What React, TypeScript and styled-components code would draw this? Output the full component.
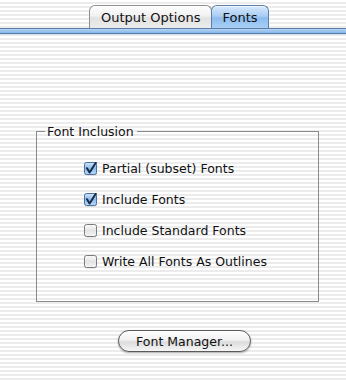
import React from 'react';
import styled, { createGlobalStyle } from 'styled-components';

const Global = createGlobalStyle`
  html, body { margin: 0; padding: 0; }
  body {
    font-family: "DejaVu Sans", "Liberation Sans", sans-serif;
    background: #f4f4f4;
  }
`;

const Window = styled.div`
  width: 346px;
  height: 382px;
  overflow: hidden;
  background: repeating-linear-gradient(
    to bottom,
    #ffffff 0px,
    #ffffff 2px,
    #ececec 2px,
    #ececec 4px
  );
  font-size: 12.5px;
  color: #111;
`;

const TabBar = styled.div`
  display: flex;
  justify-content: flex-start;
  padding-left: 89px;
  padding-top: 5px;
  height: 23px;
  align-items: flex-end;
  position: relative;
  z-index: 1;
`;

const Tab = styled.div<{ $active?: boolean }>`
  height: 23px;
  box-sizing: border-box;
  display: flex;
  align-items: center;
  justify-content: center;
  padding: 1px ${p => (p.$active ? '10px' : '11px')} 0;
  margin-right: -1px;
  border: 1px solid ${p => (p.$active ? '#5d7ea8' : '#8e8e8e')};
  border-bottom: none;
  border-radius: 6px 6px 0 0;
  font-size: 13px;
  color: #111;
  background: ${p =>
    p.$active
      ? 'linear-gradient(to bottom, #d8eafc 0%, #a9cdf3 45%, #8dbcee 55%, #a8d0f6 100%)'
      : 'linear-gradient(to bottom, #fdfdfd 0%, #f1f1f1 45%, #e2e2e2 55%, #ececec 100%)'};
  box-shadow: ${p => (p.$active ? 'inset 0 1px 0 #eef6ff' : 'inset 0 1px 0 #ffffff')};
`;

const Band = styled.div`
  height: 6px;
  box-sizing: border-box;
  border-top: 1px solid #5b7ea9;
  border-bottom: 1px solid #4f7bb1;
  background: linear-gradient(to bottom, #b8d7f6 0%, #9cc4ef 50%, #8ab8ea 100%);
  box-shadow: 0 1px 0 #d9e3ee;
`;

const Body = styled.div`
  padding: 90px 28px 0 36px;
`;

const Group = styled.fieldset`
  margin: 0;
  width: 283px;
  height: 178px;
  box-sizing: border-box;
  border: 1px solid #8a8a8a;
  padding: 0;
`;

const Legend = styled.legend`
  margin-left: 8px;
  padding: 0 3px 0 2px;
  font-size: 12.5px;
  color: #111;
`;

const Options = styled.div`
  display: flex;
  flex-direction: column;
  gap: 18px;
  padding: 23px 0 0 47px;
`;

const Row = styled.label`
  display: flex;
  align-items: center;
  gap: 4px;
  height: 13px;
  font-size: 12.5px;
  color: #111;
`;

const BoxWrap = styled.span`
  width: 14px;
  height: 14px;
  display: inline-flex;
`;

const CheckBox = ({ checked }: { checked: boolean }) => (
  <BoxWrap>
    <svg width="14" height="14" viewBox="0 0 14 14">
      <defs>
        <linearGradient id={checked ? 'cbOn' : 'cbOff'} x1="0" y1="0" x2="0" y2="1">
          {checked ? (
            <>
              <stop offset="0" stopColor="#cfe4fb" />
              <stop offset="0.5" stopColor="#8dbbec" />
              <stop offset="1" stopColor="#b9d9fa" />
            </>
          ) : (
            <>
              <stop offset="0" stopColor="#fbfbfb" />
              <stop offset="0.5" stopColor="#e4e4e4" />
              <stop offset="1" stopColor="#f4f4f4" />
            </>
          )}
        </linearGradient>
      </defs>
      <rect x="1" y="1.5" width="12" height="12" rx="2" fill="#bdbdbd" opacity="0.6" />
      <rect
        x="0.5"
        y="0.5"
        width="12"
        height="12"
        rx="2"
        fill={`url(#${checked ? 'cbOn' : 'cbOff'})`}
        stroke={checked ? '#4a6f9c' : '#7c7c7c'}
      />
      {checked && (
        <path
          d="M3 6.2 L5.6 10.5 L11.8 0.8"
          fill="none"
          stroke="#1a2a44"
          strokeWidth="2"
          strokeLinecap="round"
          strokeLinejoin="round"
        />
      )}
    </svg>
  </BoxWrap>
);

const ButtonRow = styled.div`
  display: flex;
  padding: 28px 0 0 118px;
`;

const PillButton = styled.button`
  width: 133px;
  height: 22px;
  border-radius: 11px;
  border: 1px solid #5a5a5a;
  background: linear-gradient(to bottom, #ffffff 0%, #f1f1f1 45%, #dcdcdc 55%, #f6f6f6 100%);
  box-shadow: 0 1px 2px rgba(0, 0, 0, 0.35), inset 0 1px 1px #ffffff;
  font-family: "DejaVu Sans", "Liberation Sans", sans-serif;
  font-size: 12.5px;
  color: #111;
  padding: 0;
`;

const options = [
  { label: 'Partial (subset) Fonts', checked: true },
  { label: 'Include Fonts', checked: true },
  { label: 'Include Standard Fonts', checked: false },
  { label: 'Write All Fonts As Outlines', checked: false },
];

export default function App() {
  return (
    <Window>
      <Global />
      <TabBar>
        <Tab>Output Options</Tab>
        <Tab $active>Fonts</Tab>
      </TabBar>
      <Band />
      <Body>
        <Group>
          <Legend>Font Inclusion</Legend>
          <Options>
            {options.map(o => (
              <Row key={o.label}>
                <CheckBox checked={o.checked} />
                {o.label}
              </Row>
            ))}
          </Options>
        </Group>
      </Body>
      <ButtonRow>
        <PillButton>Font Manager...</PillButton>
      </ButtonRow>
    </Window>
  );
}
